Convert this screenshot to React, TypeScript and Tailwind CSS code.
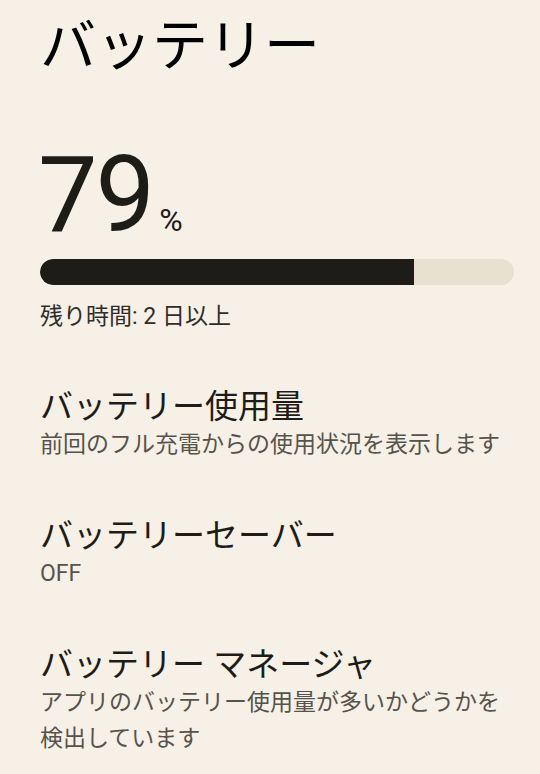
import React from "react";

const items = [
  { id: 1, title: "バッテリー使用量", summary: "前回のフル充電からの使用状況を表示します" },
  { id: 2, title: "バッテリーセーバー", summary: "OFF" },
  { id: 3, title: "バッテリー マネージャ", summary: "アプリのバッテリー使用量が多いかどうかを検出しています" },
];

export default function App() {
  const level = 79;

  return (
    <main
      className="min-h-screen w-[540px] h-[774px] overflow-hidden bg-[#f6f0e7] text-[#1e1c17]"
      style={{ fontFamily: '"Roboto", "Noto Sans CJK JP", sans-serif' }}
    >
      <div className="pl-[40px] pr-[26px]">
        <h1 className="pt-[14px] text-[56px] leading-[64px] text-black">バッテリー</h1>

        <div className="mt-[67px] flex items-baseline">
          <span className="-ml-[2px] text-[106px] leading-[100px] tracking-[-2px]">{level}</span>
          <span className="ml-[6px] text-[32px]">%</span>
        </div>

        <div className="mt-[14px] h-[26px] w-full rounded-full bg-[#e8e1d1] overflow-hidden">
          <div className="h-full bg-[#1e1c17] rounded-l-full" style={{ width: `${level}%` }} />
        </div>

        <p className="mt-[18px] text-[23px] leading-[28px] text-[#2f2d29]">残り時間: 2 日以上</p>

        <ul className="mt-[58px] flex flex-col gap-[55px]">
          {items.map((item) => (
            <li key={item.id}>
              <h2 className="text-[33px] leading-[36px] text-[#1e1c17]">{item.title}</h2>
              <p className="mt-[2px] text-[23px] leading-[36px] text-[#56534c]">{item.summary}</p>
            </li>
          ))}
        </ul>
      </div>
    </main>
  );
}
